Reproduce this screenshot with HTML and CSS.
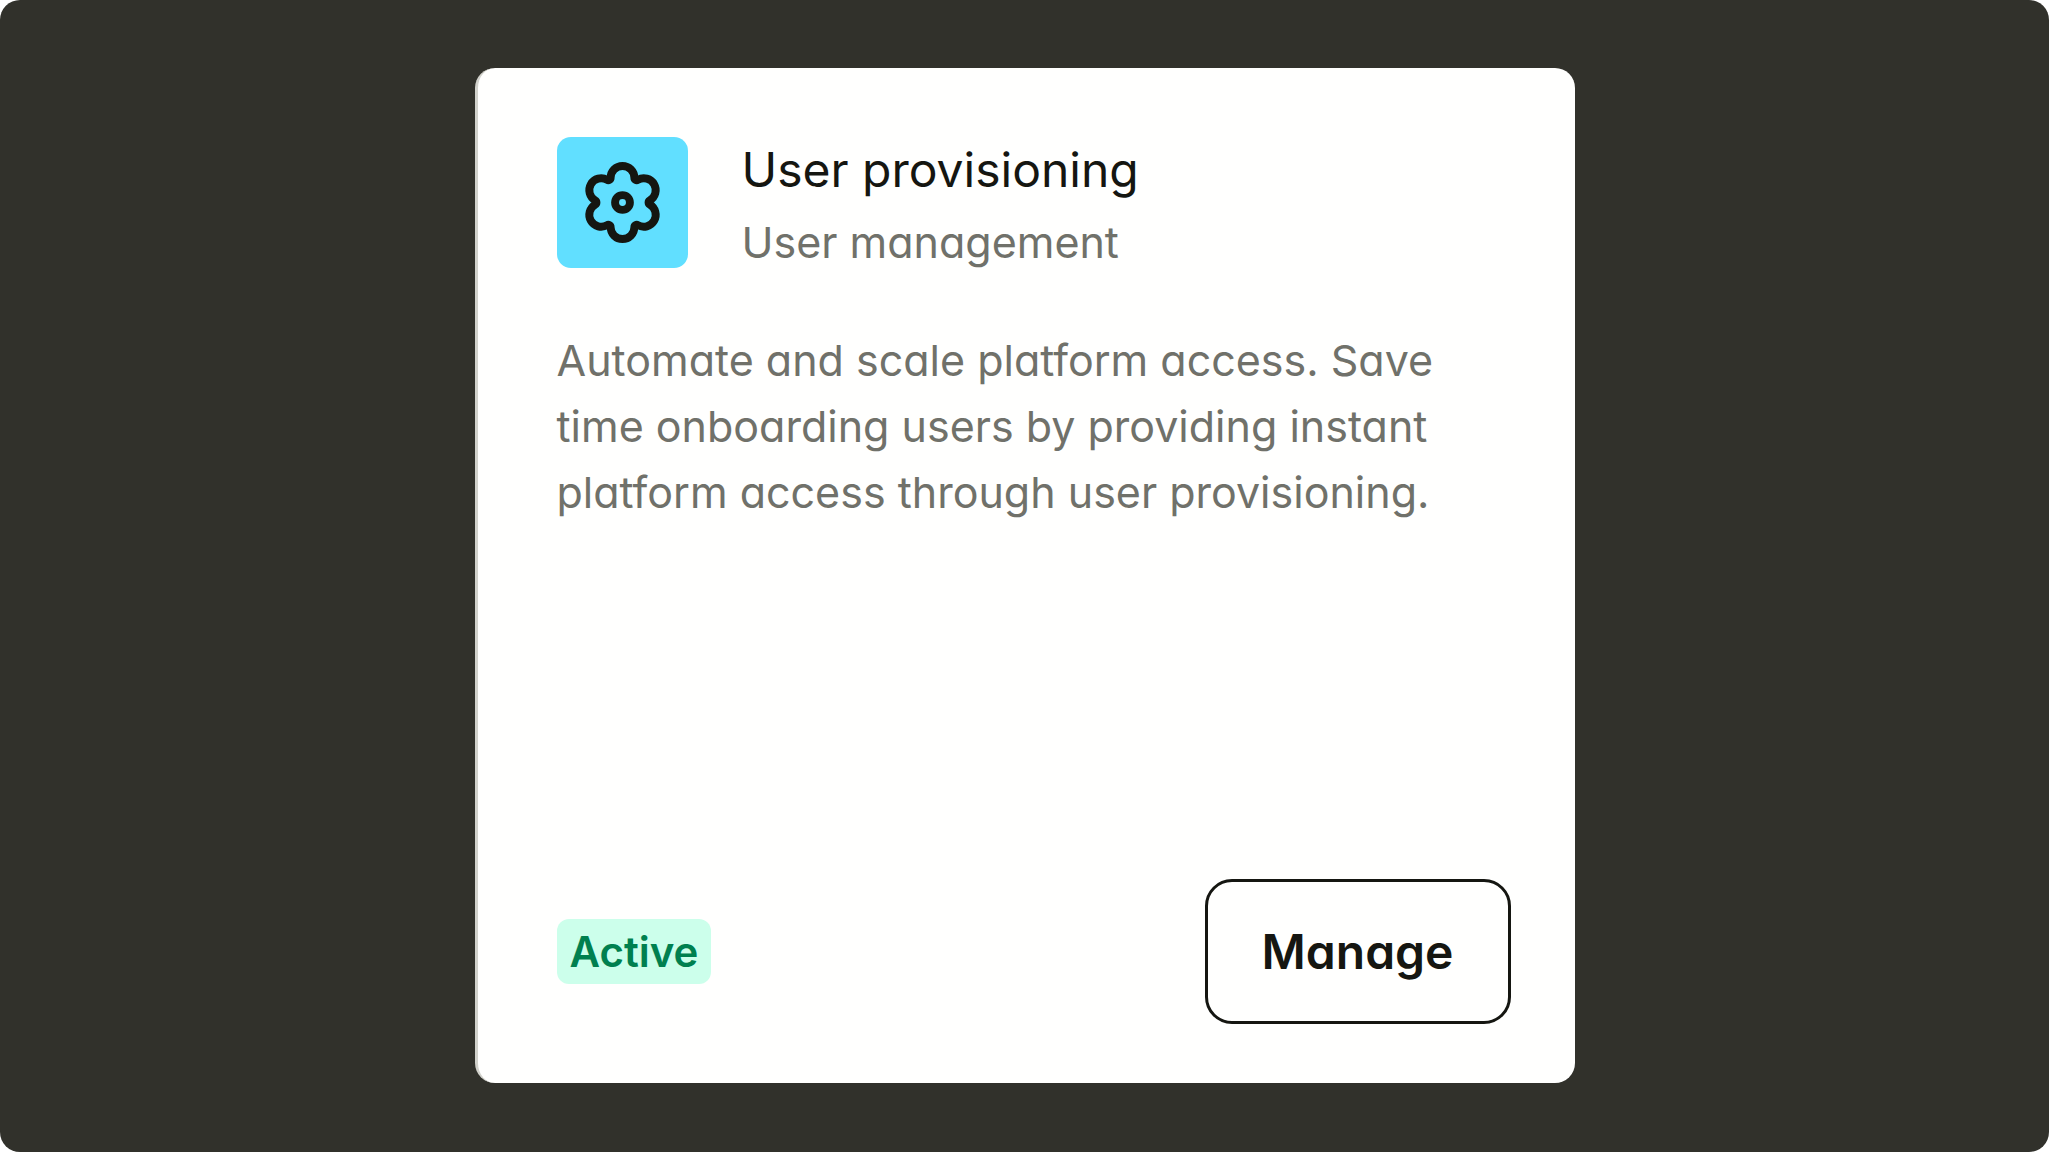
FILE: index.html
```html
<!DOCTYPE html>
<html lang="en">
    <head>
        <meta charset="UTF-8">
        <meta name="viewport" content="width=device-width, initial-scale=1.0">
        <title>User provisioning</title>
        <link rel="stylesheet" href="styles.css">
    </head>
    <body>
        <main class="panel">
            <article class="card">
                <header class="card-header">
                    <div class="card-icon">
                        <svg viewBox="-42 -42 84 84" aria-hidden="true">
                            <path d="M-12-25A12 12 0 0 1 12-25A2.4 2.4 0 0 0 15.6-22.9A12 12 0 0 1 27.6-2.1A2.4 2.4 0 0 0 27.6 2.1A12 12 0 0 1 15.6 22.9A2.4 2.4 0 0 0 12 25A12 12 0 0 1-12 25A2.4 2.4 0 0 0-15.6 22.9A12 12 0 0 1-27.6 2.1A2.4 2.4 0 0 0-27.6-2.1A12 12 0 0 1-15.6-22.9A2.4 2.4 0 0 0-12-25Z"/>
                            <circle r="7.5"/>
                        </svg>
                    </div>
                    <div>
                        <h1 class="card-title">User provisioning</h1>
                        <p class="card-category">User management</p>
                    </div>
                </header>
                <p class="card-text">Automate and scale platform access. Save time onboarding users by providing instant platform access through user provisioning.</p>
                <footer class="card-footer">
                    <span class="badge">Active</span>
                    <button class="btn" type="button">Manage</button>
                </footer>
            </article>
        </main>
    </body>
</html>
```

FILE: styles.css
```css
* {
    box-sizing: border-box;
}

body {
    margin: 0;
    background: white;
    color: #151611;
    font-family: Inter, "Liberation Sans", sans-serif;
    font-feature-settings: "cv11";
        /* single-story a */
}

.panel {
    min-height: 100vh;
    padding: 68px 24px 69px;
    display: flex;
    justify-content: center;
    background: #31312b;
    border-radius: 20px;
}

.card {
    width: 100%;
    max-width: 1100px;
    padding: 69px 64px 59px 79px;
    display: flex;
    flex-direction: column;
    background: #fffffe;
    border-left: 3px solid #d2d2cc;
    border-radius: 20px;
}

.card-header {
    display: flex;
    align-items: flex-start;
    gap: 54px;
    margin-bottom: 52px;
}
.card-icon {
    width: 131px;
    height: 131px;
    flex-shrink: 0;
    display: grid;
    place-items: center;
    background: #61dfff;
    border-radius: 14px;
}
.card-icon svg {
    width: 83px;
    height: 83px;
    fill: none;
    stroke: #151611;
    stroke-width: 8;
    stroke-linejoin: round;
}
.card-title {
    margin: 0 0 6px;
    font-size: 48px;
    font-weight: 400;
    line-height: 66px;
}
.card-category,
.card-text {
    margin: 0;
    color: #70716a;
    font-size: 43px;
    line-height: 66px;
}

.card-footer {
    margin-top: auto;
    display: flex;
    align-items: center;
    justify-content: space-between;
}
.badge {
    padding: 0 13px;
    background: #ccffeb;
    color: #00804f;
    font-size: 42px;
    font-weight: 600;
    line-height: 65px;
    border-radius: 12px;
}
.btn {
    padding: 34px 54px;
    background: transparent;
    border: 3px solid #151611;
    border-radius: 27px;
    color: inherit;
    font: inherit;
    font-size: 48px;
    font-weight: 600;
    line-height: 71px;
    cursor: pointer;
}
```
